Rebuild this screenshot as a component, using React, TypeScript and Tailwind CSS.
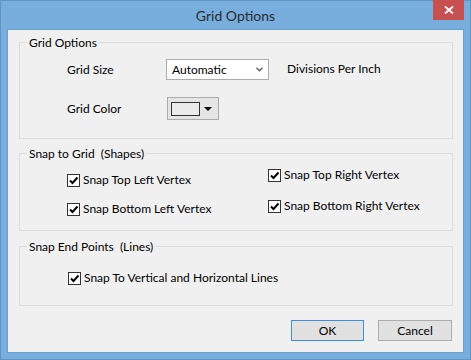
import type { ReactNode } from "react";

function CheckBox({ label }: { label: string }) {
  return (
    <label className="flex h-[16px] items-center gap-[3px]">
      <span className="flex h-[13px] w-[13px] items-center justify-center border border-[#333333] bg-white">
        <svg viewBox="0 0 11 11" className="h-[11px] w-[11px]" aria-hidden="true">
          <path d="M2 5.5 L4.5 8 L9.5 2.5" fill="none" stroke="#000" strokeWidth={2} />
        </svg>
      </span>
      <span>{label}</span>
    </label>
  );
}

function Group({ title, children, className = "" }: { title: string; children: ReactNode; className?: string }) {
  return (
    <fieldset className={`mx-[11px] w-[434px] border border-[#dcdcdc] ${className}`}>
      <legend className="ml-[7px] px-[2px] leading-[15px]">{title}</legend>
      {children}
    </fieldset>
  );
}

export default function App() {
  return (
    <div className="flex h-[360px] w-[471px] flex-col border border-[#5f95c6] bg-[#78aedd] font-['Lato',sans-serif] text-[12px] text-black">
      {/* title bar */}
      <div className="relative flex h-[28px] items-center justify-center">
        <span className="text-[14px] text-[#2b2b2b]">Grid Options</span>
        <button
          type="button"
          className="absolute right-[6px] top-[-1px] flex h-[20px] w-[31px] items-center justify-center bg-[#c75050]"
        >
          <svg viewBox="0 0 10 8" className="h-[8px] w-[10px]" aria-hidden="true">
            <path d="M1 0.5 L9 7.5 M9 0.5 L1 7.5" stroke="#fff" strokeWidth={1.8} fill="none" />
          </svg>
        </button>
      </div>

      {/* client area */}
      <div className="mx-[6px] h-[324px] border border-[#6a9fcf] bg-[#f0f0f0]">
        <Group title="Grid Options" className="mt-[5px]">
          <div className="pl-[47px] pt-[9px] pb-[18px]">
            <div className="flex items-center">
              <span className="w-[99px]">Grid Size</span>
              <div className="flex h-[21px] w-[103px] items-center justify-between border border-[#acacac] bg-white pl-[5px] pr-[5px]">
                <span>Automatic</span>
                <svg viewBox="0 0 7 5" className="h-[5px] w-[7px]" aria-hidden="true">
                  <path d="M0.5 0.8 L3.5 3.8 L6.5 0.8" fill="none" stroke="#606060" strokeWidth={1.4} />
                </svg>
              </div>
              <span className="ml-[18px] -mt-[2px]">Divisions Per Inch</span>
            </div>
            <div className="mt-[17px] flex items-center">
              <span className="w-[100px]">Grid Color</span>
              <div className="flex h-[23px] w-[52px] items-center border border-[#acacac] bg-[#e5e5e5] pl-[3px]">
                <span className="h-[14px] w-[29px] border border-[#333333] bg-[#ebebeb]" />
                <svg viewBox="0 0 8 4" className="ml-[4px] h-[4px] w-[8px]" aria-hidden="true">
                  <path d="M0 0 L8 0 L4 4 Z" fill="#000" />
                </svg>
              </div>
            </div>
          </div>
        </Group>

        <Group title="Snap to Grid  (Shapes)" className="mt-[7px] whitespace-pre">
          <div className="flex pb-[13px]">
            <div className="w-[248px] pl-[47px] pt-[11px]">
              <CheckBox label="Snap Top Left Vertex" />
              <div className="mt-[13px]">
                <CheckBox label="Snap Bottom Left Vertex" />
              </div>
            </div>
            <div className="pt-[6px]">
              <CheckBox label="Snap Top Right Vertex" />
              <div className="mt-[15px]">
                <CheckBox label="Snap Bottom Right Vertex" />
              </div>
            </div>
          </div>
        </Group>

        <Group title="Snap End Points  (Lines)" className="mt-[8px] whitespace-pre">
          <div className="pl-[48px] pt-[16px] pb-[19px]">
            <CheckBox label="Snap To Vertical and Horizontal Lines" />
          </div>
        </Group>

        <div className="mr-[11px] mt-[14px] flex justify-end gap-[14px]">
          <button
            type="button"
            className="h-[21px] w-[73px] border border-[#3c8fe0] bg-[#e1e1e1]"
          >
            OK
          </button>
          <button
            type="button"
            className="h-[21px] w-[74px] border border-[#adadad] bg-[#e1e1e1]"
          >
            Cancel
          </button>
        </div>
      </div>
    </div>
  );
}
